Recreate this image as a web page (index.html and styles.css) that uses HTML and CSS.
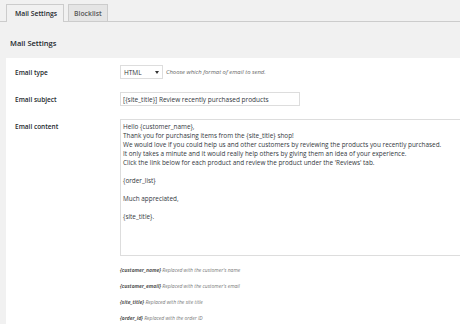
FILE: index.html
```html
<!DOCTYPE html>
<html>
  <head>
    <link rel="stylesheet" href="styles.css">
  </head>
  <body>
    <div class="tabs">
      <a class="tab active">Mail Settings</a>
      <a class="tab">Blocklist</a>
    </div>

    <h2 class="section-title">Mail Settings</h2>

    <div class="panel">
      <div class="form-row">
        <label class="field-label">Email type</label>
        <div class="field">
          <div class="select-box">
            <span>HTML</span>
            <span class="caret"></span>
          </div>
          <span class="hint">Choose which format of email to send.</span>
        </div>
      </div>

      <div class="form-row">
        <label class="field-label">Email subject</label>
        <div class="field">
          <input type="text" class="text-input" value="[{site_title}] Review recently purchased products" />
        </div>
      </div>

      <div class="form-row top">
        <label class="field-label">Email content</label>
        <div class="field column">
          <textarea class="content-box" readonly>Hello {customer_name},
Thank you for purchasing items from the {site_title} shop!
We would love if you could help us and other customers by reviewing the products you recently purchased.
It only takes a minute and it would really help others by giving them an idea of your experience.
Click the link below for each product and review the product under the 'Reviews' tab.

{order_list}

Much appreciated,

{site_title}.</textarea>

          <ul class="tags">
            <li><b>{customer_name}</b> Replaced with the customer's name</li>
            <li><b>{customer_email}</b> Replaced with the customer's email</li>
            <li><b>{site_title}</b> Replaced with the site title</li>
            <li><b>{order_id}</b> Replaced with the order ID</li>
          </ul>
        </div>
      </div>
    </div>
  </body>
</html>
```

FILE: styles.css
```css
/* admin settings page */
body {
  margin: 0;
  background-color: #f1f1f1;
  font-family: "Open Sans", Arial, sans-serif;
  color: #23282d;
  overflow: hidden;
}

.tabs {
  display: flex;
  gap: 4px;
  padding: 4px 0 0 6px;
  border-bottom: 1px solid #ccc;
  height: 17px;
}

.tab {
  display: flex;
  align-items: center;
  padding: 0 5px;
  font-size: 6.8px;
  font-weight: 600;
  color: #555;
  background-color: #e5e5e5;
  border: 1px solid #ccc;
  border-bottom: none;
  height: 17px;
  box-sizing: border-box;
}

.tab.active {
  background-color: #f1f1f1;
  color: #23282d;
  height: 18px;
  padding: 0 6px 0 8px;
}

.section-title {
  margin: 15px 0 0 10px;
  font-size: 7.5px;
  font-weight: 600;
  line-height: 12px;
  height: 12px;
}

.panel {
  margin: 9px 0 0 6px;
  background-color: #fff;
  padding: 7px 0 2px 9px;
  display: flex;
  flex-direction: column;
  gap: 13px;
}

.form-row {
  display: flex;
  align-items: center;
}

.form-row.top {
  align-items: flex-start;
}

.field-label {
  width: 105px;
  flex-shrink: 0;
  font-size: 6.5px;
  font-weight: 600;
}

.form-row.top .field-label {
  margin-top: 3px;
}

.field {
  display: flex;
  align-items: center;
  gap: 3px;
}

.field.column {
  flex-direction: column;
  align-items: flex-start;
  gap: 0;
}

.select-box {
  display: flex;
  align-items: center;
  justify-content: space-between;
  width: 43px;
  height: 14px;
  box-sizing: border-box;
  padding: 0 3px;
  border: 1px solid #ddd;
  font-size: 6.5px;
  color: #32373c;
}

.caret {
  width: 0;
  height: 0;
  border-left: 2px solid transparent;
  border-right: 2px solid transparent;
  border-top: 3px solid #333;
}

.hint {
  font-size: 5.9px;
  font-style: italic;
  color: #666;
}

.text-input {
  width: 180px;
  height: 14px;
  box-sizing: border-box;
  margin: 0;
  padding: 0 2px;
  border: 1px solid #ddd;
  font-family: "Open Sans", Arial, sans-serif;
  font-size: 6.5px;
  color: #32373c;
}

.content-box {
  width: 360px;
  height: 137px;
  box-sizing: border-box;
  margin: 0;
  padding: 2px 2px;
  border: 1px solid #ddd;
  font-family: "Open Sans", Arial, sans-serif;
  font-size: 6.4px;
  line-height: 9px;
  color: #32373c;
  resize: none;
  overflow: hidden;
}

.tags {
  list-style: none;
  margin: 10px 0 0;
  padding: 0;
  display: flex;
  flex-direction: column;
  gap: 8px;
}

.tags li {
  font-size: 5px;
  line-height: 8px;
  font-style: italic;
  color: #777;
}

.tags b {
  color: #555;
}
```
